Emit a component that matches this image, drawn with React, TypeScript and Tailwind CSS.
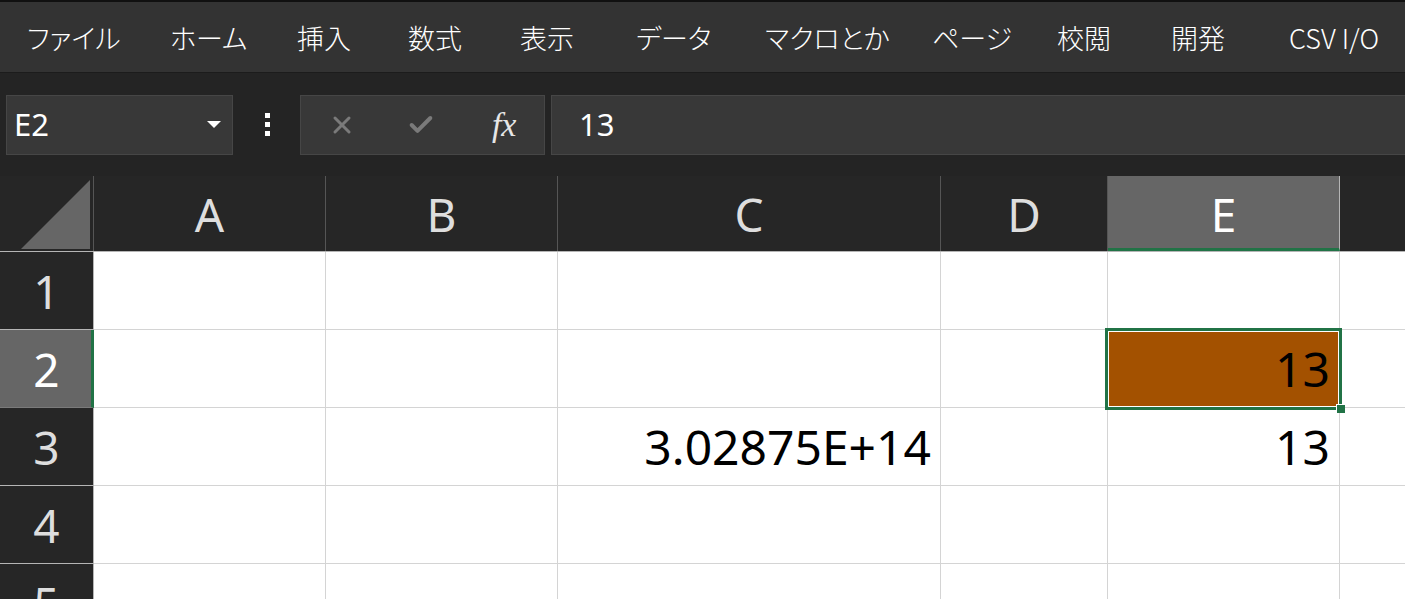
import { X, Check } from 'lucide-react';

const menus = [
    { label: 'ファイル', w: 'w-[143px]' },
    { label: 'ホーム', w: 'w-[127px]' },
    { label: '挿入', w: 'w-[111px]' },
    { label: '数式', w: 'w-[112px]' },
    { label: '表示', w: 'w-[116px]' },
    { label: 'データ', w: 'w-[129px]' },
    { label: 'マクロとか', w: 'w-[167px]' },
    { label: 'ページ', w: 'w-[125px]' },
    { label: '校閲', w: 'w-[114px]' },
    { label: '開発', w: 'w-[118px]' },
    { label: 'CSV I/O', w: 'w-[200px]' },
];

const cols = [
    { name: 'A', w: 'w-[232px]' },
    { name: 'B', w: 'w-[232px]' },
    { name: 'C', w: 'w-[383px]' },
    { name: 'D', w: 'w-[167px]' },
    { name: 'E', w: 'w-[232px]' },
    { name: '', w: 'w-[200px]' },
];

// row -> col -> value
const cells: Record<number, Record<number, string>> = {
    2: { 4: '13' },
    3: { 2: '3.02875E+14', 4: '13' },
};

const ui = "font-['Noto_Sans','Noto_Sans_CJK_JP',sans-serif]";

export default function App() {
    return (
        <div className={`w-[1405px] h-[599px] overflow-hidden bg-[#242424] ${ui}`}>
            {/* menu */}
            <div className="h-[2px] bg-[#101010]" />
            <div className="h-[70px] bg-[#333333] flex items-center pl-[27px] overflow-hidden">
                {menus.map((m) => (
                    <div
                        key={m.label}
                        className={`${m.w} shrink-0 text-[27px] font-light text-white whitespace-nowrap font-['Noto_Sans_CJK_JP',sans-serif] [font-feature-settings:'palt'] leading-none`}
                    >
                        {m.label}
                    </div>
                ))}
            </div>

            {/* formula bar */}
            <div className="h-[104px] flex items-center overflow-hidden border-t border-[#1c1c1c]">
                <div className="ml-[6px] w-[227px] h-[60px] shrink-0 bg-[#383838] border border-[#464646] flex items-center justify-between pl-[7px] pr-[11px]">
                    <span className="text-[31px] text-white leading-none">E2</span>
                    <span className="w-0 h-0 border-l-[7px] border-r-[7px] border-t-[7px] border-l-transparent border-r-transparent border-t-white" />
                </div>
                <div className="w-[67px] shrink-0 flex flex-col items-center gap-[4px] pl-[2px]">
                    <span className="w-[5px] h-[5px] bg-white" />
                    <span className="w-[5px] h-[5px] bg-white" />
                    <span className="w-[5px] h-[5px] bg-white" />
                </div>
                <div className="w-[245px] h-[60px] shrink-0 bg-[#383838] border border-[#464646] flex items-center">
                    <div className="w-[82px] flex justify-center pl-[1px]">
                        <X size={28} strokeWidth={2.6} color="#7a7a7a" />
                    </div>
                    <div className="w-[82px] flex justify-center pr-[4px]">
                        <Check size={28} strokeWidth={3.4} color="#7a7a7a" />
                    </div>
                    <div className="w-[80px] flex justify-center">
                        <span className="font-['Liberation_Serif',serif] italic text-[34px] text-[#e6e6e6] leading-none">fx</span>
                    </div>
                </div>
                <div className="ml-[6px] w-[900px] h-[60px] shrink-0 bg-[#383838] border border-[#464646] flex items-center pl-[27px]">
                    <span className="text-[31px] text-white leading-none">13</span>
                </div>
            </div>

            {/* column headers */}
            <div className="flex h-[76px] bg-[#262626] border-b border-[#b5b5b5]">
                <div className="w-[94px] shrink-0 border-r border-[#555] flex items-end justify-end pr-[3px] pb-[2px]">
                    <svg width="69" height="69" viewBox="0 0 69 69">
                        <polygon points="0,69 69,69 69,0" fill="#666666" />
                    </svg>
                </div>
                {cols.map((c, ci) => (
                    <div
                        key={ci}
                        className={`${c.w} shrink-0 flex items-center justify-center text-[46px] leading-none ${
                            ci === 4
                                ? 'bg-[#666666] text-white border-r border-[#b5b5b5] border-b-[3px] border-b-[#217346] pt-[3px]'
                                : 'text-[#dedede] border-r border-[#555]'
                        }`}
                    >
                        {c.name}
                    </div>
                ))}
            </div>

            {/* rows */}
            {[1, 2, 3, 4, 5].map((r) => (
                <div key={r} className="flex h-[78px]">
                    <div
                        className={`w-[94px] shrink-0 flex items-center justify-center text-[46px] leading-none border-b border-[#7a7a7a] ${
                            r === 2
                                ? 'bg-[#666666] text-white border-r-[3px] border-r-[#217346] pl-[2px]'
                                : 'bg-[#262626] text-[#dedede] border-r border-[#b5b5b5]'
                        }`}
                    >
                        {r}
                    </div>
                    {cols.map((c, ci) => {
                        const v = cells[r]?.[ci];
                        const sel = r === 2 && ci === 4;
                        return (
                            <div
                                key={ci}
                                className={`${c.w} shrink-0 relative flex items-center justify-end pr-[9px] text-[48px] leading-none text-black border-r border-b border-[#d4d4d4] ${
                                    sel ? 'bg-[#a35100]' : 'bg-white'
                                }`}
                            >
                                {v}
                                {sel && (
                                    <div className="absolute z-10 -left-[3px] -top-[2px] -right-[3px] -bottom-[3px] border-[3px] border-[#217346]">
                                        <div className="absolute inset-0 border border-white" />
                                        <div className="absolute -right-[6px] -bottom-[6px] w-[9px] h-[9px] bg-[#217346] border-l border-t border-white" />
                                    </div>
                                )}
                            </div>
                        );
                    })}
                </div>
            ))}
        </div>
    );
}
